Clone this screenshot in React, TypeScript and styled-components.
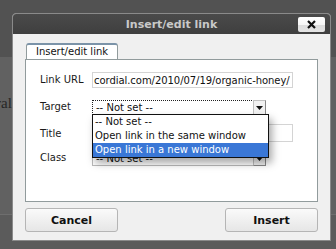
import React from 'react';
import styled, { createGlobalStyle } from 'styled-components';

const GlobalStyle = createGlobalStyle`
  html, body {
    margin: 0;
    padding: 0;
    width: 336px;
    height: 249px;
    overflow: hidden;
    background: #5b5b5b;
  }
`;

const Page = styled.div`
  position: relative;
  width: 336px;
  height: 249px;
  overflow: hidden;
`;

const PageHeader = styled.div`
  height: 57px;
  background: #525252;
`;

const PageBody = styled.div`
  height: 158px;
  background: #616161;
  border-bottom: 1px solid #6e6e6e;
  padding: 37px 0 0 0;
  box-sizing: border-box;
  font-family: 'Liberation Serif', serif;
  font-size: 15px;
  color: #262626;
  line-height: 18px;
`;

const PageText = styled.span`
  display: inline-block;
  margin-left: -4px;
`;

const Dialog = styled.div`
  position: absolute;
  left: 12px;
  top: 13px;
  width: 319px;
  height: 228px;
  box-sizing: border-box;
  background: #f0f0f0;
  border: 1px solid #8a8a8a;
  border-radius: 4px 4px 0 0;
  display: flex;
  flex-direction: column;
  font-family: 'DejaVu Sans', Verdana, sans-serif;
`;

const TitleBar = styled.div`
  position: relative;
  height: 21px;
  background: linear-gradient(#4a4a4a, #3f3f3f);
  border-radius: 3px 3px 0 0;
  display: flex;
  align-items: center;
  justify-content: center;
  color: #c9c9c9;
  font-size: 11px;
  font-weight: bold;
`;

const CloseButton = styled.div`
  position: absolute;
  right: 5px;
  top: 3px;
  width: 27px;
  height: 15px;
  box-sizing: border-box;
  border-radius: 2px;
  background: linear-gradient(#ffffff 0%, #f6f6f6 50%, #dcdcdc 51%, #e4e4e4 100%);
  display: flex;
  align-items: center;
  justify-content: center;
`;

const Content = styled.div`
  flex: 1;
  padding: 9px 12px 8px 12px;
  display: flex;
  flex-direction: column;
`;

const Tabs = styled.div`
  display: flex;
  padding-left: 1px;
`;

const Tab = styled.div`
  height: 16px;
  padding: 0 8px;
  width: 92px;
  box-sizing: border-box;
  border: 1px solid #919b9c;
  border-top: 2px solid #7b93a8;
  border-bottom: none;
  border-radius: 3px 3px 0 0;
  background: #fff;
  font-size: 10px;
  line-height: 14px;
  color: #111;
  text-align: center;
  white-space: nowrap;
`;

const Panel = styled.div`
  position: relative;
  height: 143px;
  box-sizing: border-box;
  border: 1px solid #919b9c;
  background: #fff;
  padding: 12px 0 0 14px;
  display: flex;
  flex-direction: column;
`;

const Row = styled.div<{ $h: number }>`
  display: flex;
  align-items: flex-end;
  height: ${p => p.$h}px;
`;

const Label = styled.div`
  width: 52px;
  height: 16px;
  line-height: 16px;
  font-size: 10px;
  color: #1a1a1a;
`;

const TextInput = styled.div<{ $w: number; $h?: number }>`
  width: ${p => p.$w}px;
  height: ${p => p.$h ?? 16}px;
  box-sizing: border-box;
  border: 1px solid #d4d4d4;
  overflow: hidden;
  display: flex;
  align-items: center;
  padding-left: 1px;
  font-size: 10px;
  letter-spacing: -0.05px;
  color: #111;
  white-space: nowrap;
`;

const Select = styled.div<{ $focus?: boolean }>`
  width: 174px;
  height: 15px;
  box-sizing: border-box;
  border: 1px ${p => (p.$focus ? 'dotted #222' : 'solid #bbb')};
  display: flex;
  align-items: center;
  justify-content: space-between;
  font-size: 10px;
  color: #111;
  padding-left: 3px;
  background: #fff;
`;

const Arrow = styled.div`
  width: 13px;
  height: 15px;
  margin-right: -1px;
  box-sizing: border-box;
  border: 1px solid #c0c0c0;
  border-right-color: #888;
  border-bottom-color: #888;
  background: #f2f2f2;
  display: flex;
  align-items: center;
  justify-content: center;
`;

const DropList = styled.div`
  position: absolute;
  left: 66px;
  top: 54px;
  width: 177px;
  box-sizing: border-box;
  border: 1px solid #111;
  background: #fff;
  box-shadow: 3px 5px 8px rgba(0, 0, 0, 0.35);
  font-size: 10px;
  color: #111;
  z-index: 2;
`;

const Option = styled.div<{ $active?: boolean }>`
  height: 14px;
  line-height: 14px;
  padding-left: 2px;
  white-space: nowrap;
  background: ${p => (p.$active ? '#3a77d6' : 'transparent')};
  color: ${p => (p.$active ? '#fff' : '#111')};
`;

const Buttons = styled.div`
  margin-top: 6px;
  display: flex;
  justify-content: space-between;
`;

const Button = styled.div`
  width: 93px;
  height: 24px;
  box-sizing: border-box;
  border: 1px solid #b5b5b5;
  border-radius: 3px;
  background: linear-gradient(#fafafa, #e6e6e6);
  display: flex;
  align-items: center;
  justify-content: center;
  font-size: 11px;
  font-weight: bold;
  color: #111;
`;

const DownArrow = () => (
  <svg width="7" height="4" viewBox="0 0 7 4">
    <path d="M0 0 H7 L3.5 4 Z" fill="#111" />
  </svg>
);

const CloseIcon = () => (
  <svg width="9" height="9" viewBox="0 0 9 9">
    <path d="M1 1 L8 8 M8 1 L1 8" stroke="#111" strokeWidth="2.2" />
  </svg>
);

export default function App() {
  return (
    <>
      <GlobalStyle />
      <Page>
        <PageHeader />
        <PageBody>
          <PageText>ral</PageText>
        </PageBody>
        <Dialog>
          <TitleBar>
            Insert/edit link
            <CloseButton>
              <CloseIcon />
            </CloseButton>
          </TitleBar>
          <Content>
            <Tabs>
              <Tab>Insert/edit link</Tab>
            </Tabs>
            <Panel>
              <Row $h={16}>
                <Label>Link URL</Label>
                <TextInput $w={201}>cordial.com/2010/07/19/organic-honey/</TextInput>
              </Row>
              <Row $h={27}>
                <Label>Target</Label>
                <Select $focus>
                  -- Not set --
                  <Arrow>
                    <DownArrow />
                  </Arrow>
                </Select>
              </Row>
              <Row $h={27}>
                <Label>Title</Label>
                <TextInput $w={201} $h={18} />
              </Row>
              <Row $h={24}>
                <Label>Class</Label>
                <Select>
                  -- Not set --
                  <Arrow>
                    <DownArrow />
                  </Arrow>
                </Select>
              </Row>
              <DropList>
                <Option>-- Not set --</Option>
                <Option>Open link in the same window</Option>
                <Option $active>Open link in a new window</Option>
              </DropList>
            </Panel>
            <Buttons>
              <Button>Cancel</Button>
              <Button>Insert</Button>
            </Buttons>
          </Content>
        </Dialog>
      </Page>
    </>
  );
}
